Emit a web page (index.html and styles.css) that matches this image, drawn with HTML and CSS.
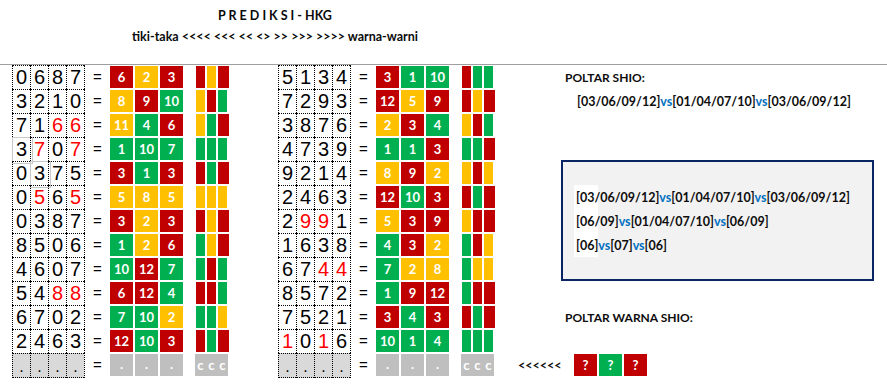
FILE: index.html
```html
<!DOCTYPE html>
<html>
<head>
<meta charset="utf-8">
<link rel="stylesheet" href="styles.css">
</head>
<body>
<div class="sheet">
  <header class="head">
    <div class="title">P R E D I K S I - HKG</div>
    <div class="sub">tiki-taka &lt;&lt;&lt;&lt; &lt;&lt;&lt; &lt;&lt; &lt;&gt; &gt;&gt; &gt;&gt;&gt; &gt;&gt;&gt;&gt; warna-warni</div>
  </header>
  <main class="main">
    <section class="tbl left">
      <div class="row"><div class="digits"><span>0</span><span>6</span><span>8</span><span>7</span></div><span class="eq">=</span><div class="cells"><span class="r">6</span><span class="y">2</span><span class="r">3</span></div><div class="bars"><i class="r"></i><i class="y"></i><i class="r"></i></div></div>
      <div class="row"><div class="digits"><span>3</span><span>2</span><span>1</span><span>0</span></div><span class="eq">=</span><div class="cells"><span class="y">8</span><span class="r">9</span><span class="g">10</span></div><div class="bars"><i class="y"></i><i class="r"></i><i class="g"></i></div></div>
      <div class="row"><div class="digits"><span>7</span><span>1</span><span class="hot">6</span><span class="hot">6</span></div><span class="eq">=</span><div class="cells"><span class="y">11</span><span class="g">4</span><span class="r">6</span></div><div class="bars"><i class="y"></i><i class="g"></i><i class="r"></i></div></div>
      <div class="row"><div class="digits"><span class="sel">3</span><span class="hot">7</span><span>0</span><span class="hot">7</span></div><span class="eq">=</span><div class="cells"><span class="g">1</span><span class="g">10</span><span class="g">7</span></div><div class="bars"><i class="g"></i><i class="g"></i><i class="g"></i></div></div>
      <div class="row"><div class="digits"><span>0</span><span class="sel">3</span><span>7</span><span>5</span></div><span class="eq">=</span><div class="cells"><span class="r">3</span><span class="g">1</span><span class="r">3</span></div><div class="bars"><i class="r"></i><i class="g"></i><i class="r"></i></div></div>
      <div class="row"><div class="digits"><span>0</span><span class="hot">5</span><span>6</span><span class="hot">5</span></div><span class="eq">=</span><div class="cells"><span class="y">5</span><span class="y">8</span><span class="y">5</span></div><div class="bars"><i class="y"></i><i class="y"></i><i class="y"></i></div></div>
      <div class="row"><div class="digits"><span>0</span><span>3</span><span>8</span><span>7</span></div><span class="eq">=</span><div class="cells"><span class="r">3</span><span class="y">2</span><span class="r">3</span></div><div class="bars"><i class="r"></i><i class="y"></i><i class="r"></i></div></div>
      <div class="row"><div class="digits"><span>8</span><span>5</span><span>0</span><span>6</span></div><span class="eq">=</span><div class="cells"><span class="g">1</span><span class="y">2</span><span class="r">6</span></div><div class="bars"><i class="g"></i><i class="y"></i><i class="r"></i></div></div>
      <div class="row"><div class="digits"><span>4</span><span>6</span><span>0</span><span>7</span></div><span class="eq">=</span><div class="cells"><span class="g">10</span><span class="r">12</span><span class="g">7</span></div><div class="bars"><i class="g"></i><i class="r"></i><i class="g"></i></div></div>
      <div class="row"><div class="digits"><span>5</span><span>4</span><span class="hot">8</span><span class="hot">8</span></div><span class="eq">=</span><div class="cells"><span class="r">6</span><span class="r">12</span><span class="g">4</span></div><div class="bars"><i class="r"></i><i class="r"></i><i class="g"></i></div></div>
      <div class="row"><div class="digits"><span>6</span><span>7</span><span>0</span><span>2</span></div><span class="eq">=</span><div class="cells"><span class="g">7</span><span class="g">10</span><span class="y">2</span></div><div class="bars"><i class="g"></i><i class="g"></i><i class="y"></i></div></div>
      <div class="row"><div class="digits"><span>2</span><span>4</span><span>6</span><span>3</span></div><span class="eq">=</span><div class="cells"><span class="r">12</span><span class="g">10</span><span class="r">3</span></div><div class="bars"><i class="r"></i><i class="g"></i><i class="r"></i></div></div>
      <div class="row last"><div class="digits"><span>.</span><span>.</span><span>.</span><span>.</span></div><span class="eq">=</span><div class="cells"><span class="n">.</span><span class="n">.</span><span class="n">.</span></div><div class="bars cc"><b>c</b><b>c</b><b>c</b></div></div>
    </section>

    <section class="tbl mid">
      <div class="row"><div class="digits"><span>5</span><span>1</span><span>3</span><span>4</span></div><span class="eq">=</span><div class="cells"><span class="r">3</span><span class="g">1</span><span class="g">10</span></div><div class="bars"><i class="r"></i><i class="g"></i><i class="g"></i></div></div>
      <div class="row"><div class="digits"><span>7</span><span>2</span><span>9</span><span>3</span></div><span class="eq">=</span><div class="cells"><span class="r">12</span><span class="y">5</span><span class="r">9</span></div><div class="bars"><i class="r"></i><i class="y"></i><i class="r"></i></div></div>
      <div class="row"><div class="digits"><span>3</span><span>8</span><span>7</span><span>6</span></div><span class="eq">=</span><div class="cells"><span class="y">2</span><span class="r">3</span><span class="g">4</span></div><div class="bars"><i class="y"></i><i class="r"></i><i class="g"></i></div></div>
      <div class="row"><div class="digits"><span>4</span><span>7</span><span>3</span><span>9</span></div><span class="eq">=</span><div class="cells"><span class="g">1</span><span class="g">1</span><span class="r">3</span></div><div class="bars"><i class="g"></i><i class="g"></i><i class="r"></i></div></div>
      <div class="row"><div class="digits"><span>9</span><span>2</span><span>1</span><span>4</span></div><span class="eq">=</span><div class="cells"><span class="y">8</span><span class="r">9</span><span class="y">2</span></div><div class="bars"><i class="y"></i><i class="r"></i><i class="y"></i></div></div>
      <div class="row"><div class="digits"><span>2</span><span>4</span><span>6</span><span>3</span></div><span class="eq">=</span><div class="cells"><span class="r">12</span><span class="g">10</span><span class="r">3</span></div><div class="bars"><i class="r"></i><i class="g"></i><i class="r"></i></div></div>
      <div class="row"><div class="digits"><span>2</span><span class="hot">9</span><span class="hot">9</span><span>1</span></div><span class="eq">=</span><div class="cells"><span class="y">5</span><span class="r">3</span><span class="r">9</span></div><div class="bars"><i class="y"></i><i class="r"></i><i class="r"></i></div></div>
      <div class="row"><div class="digits"><span>1</span><span>6</span><span>3</span><span>8</span></div><span class="eq">=</span><div class="cells"><span class="g">4</span><span class="r">3</span><span class="y">2</span></div><div class="bars"><i class="g"></i><i class="r"></i><i class="y"></i></div></div>
      <div class="row"><div class="digits"><span>6</span><span>7</span><span class="hot">4</span><span class="hot">4</span></div><span class="eq">=</span><div class="cells"><span class="g">7</span><span class="y">2</span><span class="y">8</span></div><div class="bars"><i class="g"></i><i class="y"></i><i class="y"></i></div></div>
      <div class="row"><div class="digits"><span>8</span><span>5</span><span>7</span><span>2</span></div><span class="eq">=</span><div class="cells"><span class="g">1</span><span class="r">9</span><span class="r">12</span></div><div class="bars"><i class="g"></i><i class="r"></i><i class="r"></i></div></div>
      <div class="row"><div class="digits"><span>7</span><span>5</span><span>2</span><span>1</span></div><span class="eq">=</span><div class="cells"><span class="r">3</span><span class="g">4</span><span class="r">3</span></div><div class="bars"><i class="r"></i><i class="g"></i><i class="r"></i></div></div>
      <div class="row"><div class="digits"><span class="hot">1</span><span>0</span><span class="hot">1</span><span>6</span></div><span class="eq">=</span><div class="cells"><span class="g">10</span><span class="g">1</span><span class="g">4</span></div><div class="bars"><i class="g"></i><i class="g"></i><i class="g"></i></div></div>
      <div class="row last"><div class="digits"><span>.</span><span>.</span><span>.</span><span>.</span></div><span class="eq">=</span><div class="cells"><span class="n">.</span><span class="n">.</span><span class="n">.</span></div><div class="bars cc"><b>c</b><b>c</b><b>c</b></div></div>
    </section>

    <aside class="panel">
      <div class="prow lbl">POLTAR SHIO:</div>
      <div class="prow ind"><span>[03/06/09/12]<em>vs</em>[01/04/07/10]<em>vs</em>[03/06/09/12]</span></div>
      <div class="prow"></div>
      <div class="prow"></div>
      <div class="box">
        <div class="lines">
          <div class="prow">[03/06/09/12]<em>vs</em>[01/04/07/10]<em>vs</em>[03/06/09/12]</div>
          <div class="prow">[06/09]<em>vs</em>[01/04/07/10]<em>vs</em>[06/09]</div>
          <div class="prow">[06]<em>vs</em>[07]<em>vs</em>[06]</div>
        </div>
      </div>
      <div class="prow"></div>
      <div class="prow lbl">POLTAR WARNA SHIO:</div>
      <div class="prow"></div>
      <div class="prow guess">
        <span class="arrows">&lt;&lt;&lt;&lt;&lt;&lt;</span>
        <div class="cells q"><span class="r">?</span><span class="g">?</span><span class="r">?</span></div>
      </div>
    </aside>
  </main>
</div>
</body>
</html>
```

FILE: styles.css
```css
* { box-sizing: border-box; }
html, body { margin: 0; padding: 0; background: #fff; }
body {
  width: 887px;
  height: 391px;
  overflow: hidden;
  font-family: Lato, "Liberation Sans", sans-serif;
  color: #000;
}
.sheet { width: 887px; }

.head {
  height: 65px;
  padding-top: 8px;
  border-bottom: 1px solid #9f9f9f;
  width: 887px;
}
.title, .sub {
  width: 550px;
  text-align: center;
  font-weight: 700;
  font-size: 12.5px;
  line-height: 16px;
  height: 16px;
  color: #0a0a0a;
}
.sub { margin-top: 5px; }

.main { display: flex; align-items: flex-start; }

.tbl { width: 217px; flex: none; }
.tbl.left { margin-left: 12px; }
.tbl.mid { margin-left: 49px; }

.row { display: flex; height: 24px; align-items: flex-start; }

.digits {
  display: flex;
  border-right: 1px dotted #000;
  height: 24px;
}
.digits span {
  position: relative;
  width: 18px;
  height: 24px;
  border-left: 1px dotted #000;
  border-top: 1px dotted #000;
  font-family: "Liberation Sans", Arial, sans-serif;
  font-size: 20px;
  line-height: 23px;
  text-align: center;
  color: #000;
}
.row.last .digits { height: 25px; }
.row.last .digits span {
  height: 25px;
  border-bottom: 1px dotted #000;
  background: #d9d9d9;
  font-size: 16px;
  line-height: 26px;
}
.digits span.hot { color: #ff0000; }
.digits span.sel::after {
  content: "";
  position: absolute;
  left: -1px;
  top: -1px;
  width: 19px;
  height: 25px;
  border: 1px solid #c8c8c8;
}

.eq {
  width: 25px;
  height: 24px;
  text-align: center;
  font-family: "Liberation Sans", Arial, sans-serif;
  font-size: 15px;
  line-height: 24px;
}

.cells { display: flex; gap: 2px; margin-top: 1px; }
.cells span {
  width: 23px;
  height: 22px;
  display: flex;
  align-items: center;
  justify-content: center;
  color: #fff;
  font-weight: 700;
  font-size: 13px;
}
.r { background: #c00000; }
.y { background: #ffc000; }
.g { background: #00b050; }
.n { background: #bfbfbf; }
.cells span.n { align-items: flex-end; padding-bottom: 4px; }

.bars { display: flex; gap: 2px; margin-left: 13px; margin-top: 1px; }
.bars i { display: block; width: 9px; height: 22px; }
.bars i:nth-child(3).r { width: 11px; }
.bars.cc {
  background: #bfbfbf;
  width: 33px;
  height: 22px;
  margin-left: 12px;
  padding-left: 1px;
}
.bars.cc b {
  width: 9px;
  text-align: center;
  color: #fff;
  font-weight: 700;
  font-size: 13px;
  line-height: 22px;
}

.panel { margin-left: 10px; width: 382px; flex: none; }
.prow {
  height: 24px;
  display: flex;
  align-items: flex-end;
  padding-bottom: 3px;
  font-weight: 700;
  font-size: 12.5px;
  line-height: 16px;
  color: #0d0d0d;
  white-space: nowrap;
}
.prow em { font-style: normal; color: #0070c0; }
.lbl { padding-left: 60px; font-size: 12px; }
.ind { padding-left: 72px; }

.box {
  margin-left: 56px;
  margin-top: -1px;
  width: 313px;
  height: 121px;
  border: 2px solid #0b2463;
  background: #f2f2f2;
  padding-top: 23px;
  padding-left: 11px;
}
.lines {
  background: linear-gradient(to right, #fff 0 24px, transparent 24px);
  width: 290px;
}
.lines .prow { padding-left: 2px; }

.guess { padding-bottom: 0; align-items: flex-start; }
.arrows {
  width: 69px;
  padding-left: 13px;
  padding-top: 5px;
}
.cells.q { margin-top: 1px; }
.cells.q span { font-size: 13px; }
```
